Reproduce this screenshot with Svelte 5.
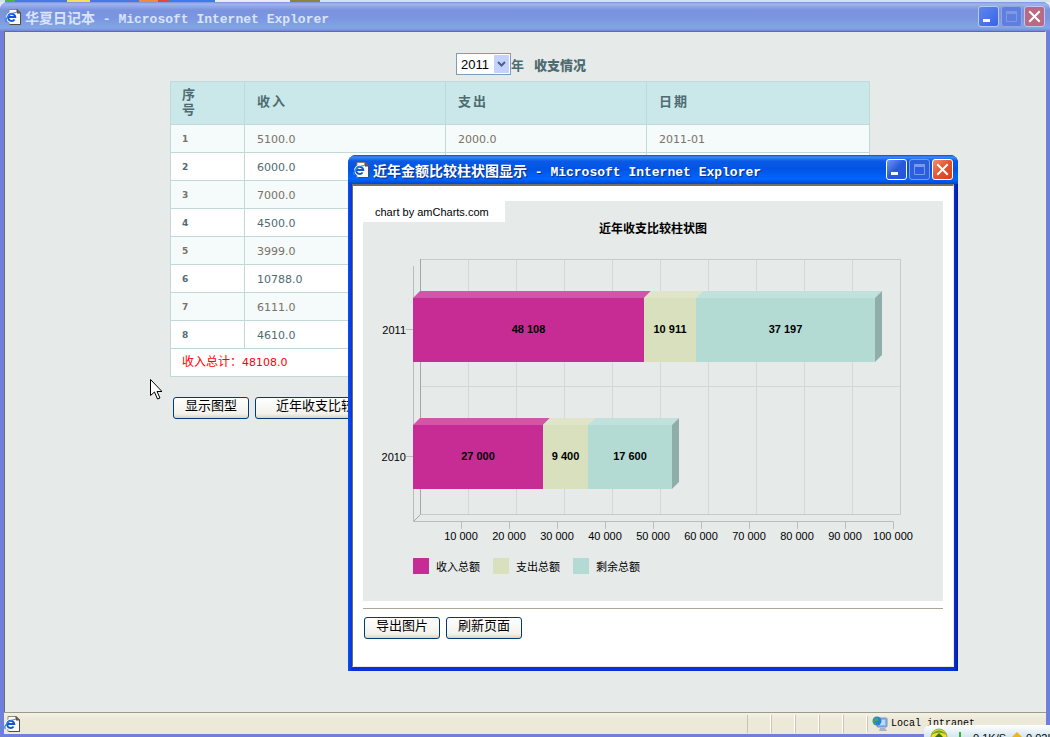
<script lang="ts">
	let year = $state('2011');

	const years = ['2011', '2010'];

	const rows = [
		['5100.0', '2000.0', '2011-01'],
		['6000.0', '1200.0', '2011-02'],
		['7000.0', '1500.0', '2011-03'],
		['4500.0', '1000.0', '2011-04'],
		['3999.0', '1300.0', '2011-05'],
		['10788.0', '1800.0', '2011-06'],
		['6111.0', '1100.0', '2011-07'],
		['4610.0', '1011.0', '2011-08']
	];

	const series = [
		{ name: '收入总额', face: '#c72c95', top: '#d156aa' },
		{ name: '支出总额', face: '#d9e0bd', top: '#e0e5c9' },
		{ name: '剩余总额', face: '#b3dbd4', top: '#c1e1dc' }
	];

	// plot area of the chart, front plane
	const X0 = 50;
	const STEP = 48;
	const DEPTH = 7;
	const BAR = 64;

	const data = [
		{ year: '2011', y: 97, values: [48108, 10911, 37197] },
		{ year: '2010', y: 224, values: [27000, 9400, 17600] }
	];

	const ticks = [1, 2, 3, 4, 5, 6, 7, 8, 9, 10];

	const fmt = (n: number) => String(n).replace(/\B(?=(\d{3})+$)/g, ' ');

	const bars = data.map((d) => {
		let sum = 0;
		const parts = d.values.map((v, i) => {
			const x = Math.round(X0 + (sum * STEP) / 10000);
			sum += v;
			const end = Math.round(X0 + (sum * STEP) / 10000);
			return { x, end, label: fmt(v), ...series[i] };
		});
		return { ...d, parts, end: parts[parts.length - 1].end };
	});
</script>

{#snippet pageIcon()}
	<svg class="page-icon" viewBox="0 0 16 16" width="16" height="16" aria-hidden="true">
		<path d="M4 .5h8l3.500 3.500v11.500H4z" fill="#fbfaf2" stroke="#8a8778" />
		<path d="M12 .5v3.500h3.500z" fill="#6d6a5c" stroke="#4f4c40" />
		<path d="M15.500 4v11.500H5" fill="none" stroke="#4f4c40" />
		<path
			d="M9.600 10.500a3.600 3.600 0 1 1 .7-2.500H3"
			fill="none"
			stroke="#fff"
			stroke-width="4"
		/>
		<path
			d="M9.600 10.500a3.600 3.600 0 1 1 .7-2.500H3"
			fill="none"
			stroke="#1257cf"
			stroke-width="2"
		/>
		<path d="M1.500 13C-.8 11 4 4 11 3.500" fill="none" stroke="#2f86ee" stroke-width="1.200" />
	</svg>
{/snippet}

{#snippet titleBar(cjk: string)}
	<header class="title-bar">
		{@render pageIcon()}
		<h1>{cjk}<span>&nbsp;- Microsoft Internet Explorer</span></h1>
		<div class="controls">
			<button class="ctl" aria-label="最小化">
				<svg viewBox="0 0 19 19"><path d="M4 12h7v3H4z" fill="#fff" /></svg>
			</button>
			<button class="ctl dim" aria-label="最大化" disabled>
				<svg viewBox="0 0 19 19">
					<path d="M4.500 5.500h10v9h-10z" fill="none" stroke="currentColor" />
					<path d="M4 4h11v3H4z" fill="currentColor" />
				</svg>
			</button>
			<button class="ctl close" aria-label="关闭">
				<svg viewBox="0 0 19 19">
					<path d="M5 5l9 9M14 5l-9 9" stroke="#fff" stroke-width="2" stroke-linecap="square" />
				</svg>
			</button>
		</div>
	</header>
{/snippet}

<div class="desktop">
	<div class="behind"></div>
	<section class="window inactive">
		{@render titleBar('华夏日记本')}
		<main>
			<div class="sheet">
				<div class="picker">
					<span class="select">
						<select id="year" bind:value={year}>
							{#each years as y}
								<option>{y}</option>
							{/each}
						</select>
						<svg viewBox="0 0 15 18" width="15" height="18" aria-hidden="true">
							<rect width="15" height="18" rx="1" fill="#c3d3fd" />
							<path d="M4 7l3.500 3.500L11 7" fill="none" stroke="#4d6185" stroke-width="2" />
						</svg>
					</span>
					<label for="year">年</label>
					<strong>收支情况</strong>
				</div>

				<table>
					<thead>
						<tr>
							<th class="no">序<br />号</th>
							<th class="money">收入</th>
							<th class="money">支出</th>
							<th>日期</th>
						</tr>
					</thead>
					<tbody>
						{#each rows as row, i}
							<tr>
								<th scope="row">{i + 1}</th>
								{#each row as cell}
									<td>{cell}</td>
								{/each}
							</tr>
						{/each}
						<tr class="total">
							<td colspan="4"><span>收入总计：</span>48108.0</td>
						</tr>
					</tbody>
				</table>

				<div class="actions">
					<button class="btn">显示图型</button>
					<button class="btn wide">近年收支比较图</button>
				</div>
			</div>
		</main>
		<footer class="status">
			{@render pageIcon()}
			<span class="panes"><i></i><i></i><i></i><i></i><i></i></span>
			<span class="zone">
				<svg viewBox="0 0 16 16" width="16" height="16" aria-hidden="true">
					<rect x="5" y="2" width="10" height="9" rx="1" fill="#7fb6f2" stroke="#7d8fb5" />
					<path d="M7 4h6v5H7z" fill="#b9dcff" />
					<path d="M8 12h5l2 3H7z" fill="#aab3c4" />
					<circle cx="5" cy="5" r="4.500" fill="#2b7fd8" />
					<path d="M2 3q3-3 4 0t-2 2t1 4q-4-1-4-4z" fill="#3fae4a" />
				</svg>
				Local intranet
			</span>
		</footer>
	</section>

	<svg class="pointer" viewBox="0 0 12 21" width="12" height="21" aria-hidden="true">
		<path
			d="M.5 .5v16l4-3.500 3 7 2.500-1-3-6.500h5z"
			fill="#fff"
			stroke="#000"
		/>
	</svg>

	<section class="window popup">
		{@render titleBar('近年金额比较柱状图显示')}
		<div class="popup-body">
			<svg class="chart" viewBox="0 0 580 400" role="img" aria-label="近年收支比较柱状图">
				<rect width="580" height="400" fill="#e6eae9" />
				<rect width="142" height="21" fill="#fff" />
				<text x="12" y="15">chart by amCharts.com</text>
				<text class="heading" x="290" y="32">近年收支比较柱状图</text>

				<g stroke="#d3d8d7">
					{#each ticks as t}
						<line x1={57.5 + t * STEP} x2={57.5 + t * STEP} y1="58" y2="313" />
					{/each}
					<line x1="58" x2="538" y1="185.5" y2="185.5" />
				</g>
				<path d="M57.500 58.500H537.500V313.500H57.500" fill="none" stroke="#c6cbca" />
				<path d="M57.500 58V313.500L50.500 320.500" fill="none" stroke="#a3a8a7" />
				<path d="M50.500 65V320.500H530.500" fill="none" stroke="#b9bebd" />

				{#each ticks as t}
					<line x1={50.5 + t * STEP} x2={50.5 + t * STEP} y1="321" y2="328" stroke="#b9bebd" />
					<text class="mid" x={X0 + t * STEP} y="339">{fmt(t * 10000)}</text>
				{/each}

				{#each bars as bar}
					<line x1="43" x2="50" y1={bar.y + 31.5} y2={bar.y + 31.5} stroke="#b9bebd" />
					<text class="end" x="43" y={bar.y + 36}>{bar.year}</text>
					{#each bar.parts as p}
						<path
							d="M{p.x} {bar.y}l{DEPTH} {-DEPTH}H{p.end + DEPTH}l{-DEPTH} {DEPTH}z"
							fill={p.top}
						/>
						<rect x={p.x} y={bar.y} width={p.end - p.x} height={BAR} fill={p.face} />
						<text class="mid bold" x={(p.x + p.end) / 2} y={bar.y + 35}>{p.label}</text>
					{/each}
					<path d="M{bar.end} {bar.y}l{DEPTH} {-DEPTH}v{BAR}l{-DEPTH} {DEPTH}z" fill="#8faea9" />
				{/each}

				{#each series as s, i}
					<rect x={X0 + i * 80} y="357" width="16" height="16" fill={s.face} />
					<text x={X0 + 23 + i * 80} y="370">{s.name}</text>
				{/each}
			</svg>
			<hr />
			<div class="popup-actions">
				<button class="btn">导出图片</button>
				<button class="btn">刷新页面</button>
			</div>
		</div>
	</section>

	<aside class="meter">
		<svg viewBox="0 0 18 18" width="18" height="18" aria-hidden="true">
			<circle cx="9" cy="9" r="8" fill="#f2d92c" stroke="#9fae2c" />
			<path d="M1 7q8-9 16 0q-8-5-16 0z" fill="#5fa62c" />
			<path d="M9 5l5 5h-3v5H7v-5H4z" fill="#35701f" />
		</svg>
		<svg class="down" viewBox="0 0 10 12" width="10" height="12" aria-hidden="true">
			<path d="M4 0h2v6h4l-5 5-5-5h4z" fill="#2fb52f" />
		</svg>
		<span>0.1K/S</span>
		<svg class="up" viewBox="0 0 10 12" width="10" height="12" aria-hidden="true">
			<path d="M5 0l5 5H7v6H3V5H0z" fill="#f0b51c" />
		</svg>
		<span>0.02K/S</span>
	</aside>
</div>

<style>
	:global(body) {
		background: #e6eae9;
	}

	.desktop {
		position: relative;
		display: flex;
		flex-direction: column;
		min-height: 100vh;
		overflow: hidden;
		font-family: 'DejaVu Sans', 'Noto Sans CJK SC', sans-serif;
		font-size: 11px;
		color: #4f6b72;
	}

	.behind {
		height: 2px;
		background: linear-gradient(
			90deg,
			#cfe3ee 0 5px,
			#4fb04a 5px 15px,
			#4a78e0 15px 67px,
			#f2e25a 67px 90px,
			#4a78e0 90px 139px,
			#f08a3c 139px 158px,
			#e0483c 158px 169px,
			#3f7be6 169px 215px,
			#e8eef0 215px 290px,
			#8a8440 290px 320px,
			#cfe3ee 320px
		);
	}

	.window {
		--frame: #0831d9;
		--bar: linear-gradient(#0a4ad8, #3a8cf8 2px, #0b5ae6 6px, #0054e3 14px, #0066ff 24px, #0046d0);
		--title: #fff;
		--edge: #fff;
		display: flex;
		flex-direction: column;
		box-sizing: border-box;
		border-radius: 8px 8px 0 0;
		padding: 0 4px 4px;
		background: var(--frame);
		overflow: hidden;
	}

	.inactive {
		--frame: #6f80dc;
		--bar: linear-gradient(#7d92dc, #a0b4ee 2px, #7b93df 8px, #7b95e0 16px, #82a6e8 26px, #7186d8);
		--title: #d8e4f8;
		--edge: #b9c9f2;
		flex: 1;
		padding-bottom: 3px;
	}

	.title-bar {
		display: flex;
		align-items: center;
		height: 29px;
		margin: 0 -4px;
		padding: 0 5px;
		background: var(--bar);
	}

	h1 {
		flex: 1;
		margin: 0 0 0 4px;
		color: var(--title);
		font: bold 14px 'Noto Sans CJK SC', sans-serif;
		white-space: nowrap;
	}
	h1 span {
		font: bold 13px 'Liberation Mono', monospace;
	}
	.popup h1 {
		text-shadow: 1px 1px 1px #0a2a80;
	}

	.controls {
		display: flex;
		gap: 2px;
	}
	.ctl {
		width: 21px;
		height: 21px;
		padding: 0;
		border: 1px solid var(--edge);
		border-radius: 3px;
		background: linear-gradient(135deg, #6e97f4, #2858dc 50%, #2456d8);
		color: #7d97ee;
	}
	.ctl svg {
		display: block;
	}
	.dim {
		border-color: #7f9bee;
		background: #2c5fdf;
	}
	.close {
		background: linear-gradient(135deg, #f0906c, #e25330 50%, #d8401c);
	}
	.inactive .ctl {
		background: linear-gradient(135deg, #5f86ee, #3664e6);
	}
	.inactive .dim {
		border-color: #8ea5e8;
		background: #5f7fe0;
		color: #7f98e6;
	}
	.inactive .close {
		background: #b96a82;
	}

	main {
		flex: 1;
		padding: 21px 10px 20px 0;
		border-top: 1px solid #716f64;
		border-right: 1px solid #f1efe2;
		border-left: 1px solid #716f64;
		background: #e6eae9;
	}

	.sheet {
		max-width: 700px;
		margin: 0 auto;
	}

	.picker {
		display: flex;
		align-items: center;
		justify-content: center;
		margin-bottom: 6px;
		padding-left: 2px;
		font-size: 13px;
		font-weight: bold;
	}
	.picker strong {
		margin-left: 10px;
	}
	.select {
		position: relative;
		display: flex;
	}
	.select svg {
		position: absolute;
		top: 2px;
		right: 2px;
		pointer-events: none;
	}
	select {
		width: 55px;
		height: 22px;
		padding: 0 0 0 4px;
		appearance: none;
		border: 1px solid #7f9db9;
		border-radius: 0;
		background: #fff;
		color: #000;
		font: 13px 'Liberation Sans', sans-serif;
	}

	table {
		width: 100%;
		table-layout: fixed;
		border-spacing: 0;
	}
	th,
	td {
		box-sizing: border-box;
		height: 28px;
		padding: 2px 12px 0;
		border-right: 1px solid #c1dad7;
		border-bottom: 1px solid #c1dad7;
		background: #fff;
		line-height: 15px;
		text-align: left;
	}
	th:first-child,
	td:first-child {
		padding-left: 11px;
		border-left: 1px solid #c1dad7;
	}
	thead th {
		height: 44px;
		padding-top: 0;
		padding-bottom: 3px;
		border-top: 1px solid #c1dad7;
		background: #cae8ea;
		font-size: 13px;
		letter-spacing: 2px;
	}
	.no {
		width: 75px;
	}
	.money {
		width: 201px;
	}
	tbody th {
		font-size: 9px;
	}
	tbody tr:nth-child(odd) > * {
		background: #f5fafa;
		color: #797268;
	}
	tbody .total > td {
		padding-top: 0;
		background: #fff;
		color: #f00;
	}
	.total span {
		font-size: 12px;
	}

	.actions,
	.popup-actions {
		display: flex;
		gap: 6px;
	}
	.actions {
		margin: 20px 0 0 3px;
	}
	.btn {
		height: 22px;
		padding: 0 11px 6px;
		border: 1px solid #003c74;
		border-radius: 3px;
		background: linear-gradient(#fff, #f2f1ea 80%, #d9d4c8);
		color: #000;
		font: 13px/14px 'Noto Sans CJK SC', sans-serif;
		white-space: nowrap;
	}
	.wide {
		padding: 0 20px 6px;
	}

	.status {
		display: flex;
		align-items: center;
		height: 21px;
		border-top: 1px solid #9c9a8c;
		background: linear-gradient(#f4f2e6, #ece9d8 6px);
		color: #000;
		font: 10px 'Liberation Mono', monospace;
	}
	.panes {
		display: flex;
		margin-left: auto;
	}
	.panes i {
		width: 22px;
		height: 18px;
		border-left: 1px solid #c9c5b2;
		border-right: 1px solid #fff;
	}
	.zone {
		display: flex;
		align-items: center;
		gap: 3px;
		width: 174px;
		padding-left: 4px;
		border-left: 1px solid #c9c5b2;
	}

	.pointer {
		position: absolute;
		top: 379px;
		left: 150px;
	}

	.popup {
		position: absolute;
		top: 155px;
		left: 348px;
		width: 610px;
		background: linear-gradient(90deg, #0a50f0, #0831d9 4px calc(100% - 4px), #001ea0);
	}
	.popup-body {
		padding: 15px 10px 27px;
		border: 1px solid #ece9d8;
		border-top: 2px solid #716f64;
		border-left-color: #716f64;
		background: #fff;
	}
	.popup-actions {
		padding-left: 1px;
	}

	.chart {
		display: block;
		width: 100%;
		font-family: 'Liberation Sans', 'Noto Sans CJK SC', sans-serif;
		font-size: 11px;
	}
	.mid,
	.heading {
		text-anchor: middle;
	}
	.end {
		text-anchor: end;
	}
	.bold,
	.heading {
		font-weight: bold;
	}
	.heading {
		font-size: 12px;
	}

	hr {
		height: 1px;
		margin: 7px 0 8px;
		border: 0;
		background: #aca899;
	}

	.meter {
		position: absolute;
		right: 0;
		bottom: 0;
		display: flex;
		box-sizing: border-box;
		width: 126px;
		height: 12px;
		padding: 3px 0 0 6px;
		overflow: hidden;
		border-radius: 6px 0 0 0;
		background: linear-gradient(#fff, #d4e6f0);
		color: #000;
		font: 11px/20px 'Liberation Sans', sans-serif;
		white-space: nowrap;
	}
	.meter svg {
		flex: none;
	}
	.meter .down {
		margin: 4px 8px 0 7px;
	}
	.meter .up {
		margin: 4px 4px 0 6px;
	}
</style>
